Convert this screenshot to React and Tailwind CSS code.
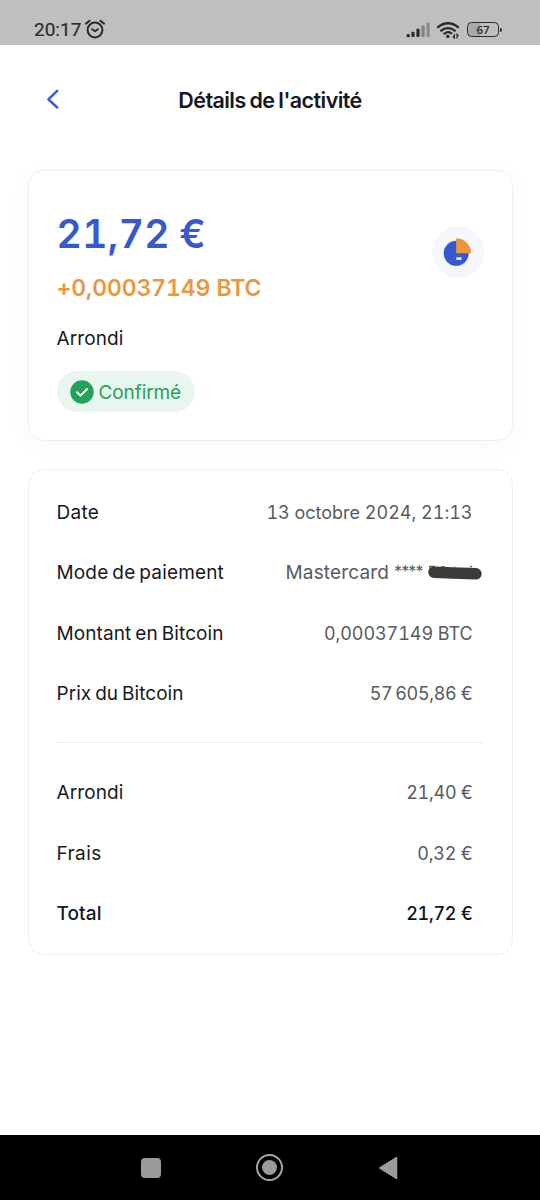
import React from 'react'

const paymentRows = [
    { label: 'Date', value: '13 octobre 2024, 21:13', labelStyle: 'tracking-[0.3px]', valueStyle: 'tracking-[-0.02px]' },
    { label: 'Mode de paiement', masked: true, labelStyle: 'tracking-[0.15px]' },
    { label: 'Montant en Bitcoin', value: '0,00037149 BTC', labelStyle: 'tracking-[0.1px]', valueStyle: 'tracking-[-0.08px]' },
    { label: 'Prix du Bitcoin', value: '57\u2009605,86 €', labelStyle: 'tracking-[0.05px]', valueStyle: 'tracking-[-0.35px]' },
]

const totalRows = [
    { label: 'Arrondi', value: '21,40 €', labelStyle: 'tracking-[0.1px]', valueStyle: 'tracking-[-0.3px]' },
    { label: 'Frais', value: '0,32 €', labelStyle: 'tracking-[0.4px]', valueStyle: 'tracking-[-0.25px]' },
    { label: 'Total', value: '21,72 €', labelStyle: 'tracking-[0.1px] font-medium', valueStyle: 'tracking-[-0.3px] font-medium text-[#11131e]' },
]

function StatusBar() {
    return (
        <div className="flex h-[45px] items-start justify-between bg-[#bfbfbf] pr-[38px] pl-[34px] pt-[18px] text-[#2b2b2b]">
            <div className="flex items-center gap-1">
                <span className="font-[Roboto,sans-serif] text-[19px] leading-6 tracking-[0px] [-webkit-text-stroke:0.2px]">20:17</span>
                <svg className="-mt-0.5 h-5 w-5" viewBox="0 0 20 20" fill="none" stroke="currentColor" strokeWidth="2" strokeLinecap="round" strokeLinejoin="round">
                    <circle cx="10" cy="11" r="7.4" />
                    <path d="M7.2 10.2 10 12.3 12.8 10.2" />
                    <path d="M1 4.6 4.6 1.8M19 4.6 15.4 1.8" />
                </svg>
            </div>
            <div className="flex items-start">
                <svg className="mt-1 h-4 w-6" viewBox="0 0 24 16" fill="currentColor">
                    <rect x="0.6" y="12" width="3.2" height="3.2" rx="1.2" />
                    <rect x="5.4" y="9.7" width="3.2" height="5.4" rx="1" />
                    <rect x="10.4" y="6.7" width="3.2" height="8.4" rx="1" />
                    <rect x="15.5" y="3.5" width="3.2" height="11.6" rx="1" opacity=".4" />
                    <rect x="20.5" y="0.6" width="3.2" height="14.5" rx="1" opacity=".35" />
                </svg>
                <svg className="mt-[3px] ml-1.5 h-[18px] w-6" viewBox="0 0 24 18" fill="none" stroke="currentColor" strokeWidth="2.3" strokeLinecap="round">
                    <path d="M2 6.2C7.8.9 16.2.9 22 6.2" />
                    <path d="M5.2 9.7C9.2 6.2 14.8 6.2 18.8 9.7" />
                    <path d="M8.4 12.6C10.7 10.8 13.3 10.8 15.2 12.1" />
                    <circle cx="11.8" cy="15.4" r="1.7" fill="currentColor" stroke="none" />
                    <path d="M18.4 13.3v3.7l-1.3-1.3M21 17v-3.7l1.3 1.3" strokeWidth="1.2" />
                </svg>
                <div className="mt-1 ml-[7px] flex items-center gap-px">
                    <div className="flex h-[15px] w-8 items-center justify-center rounded-[4.5px] border-[1.5px] border-[#2b2b2b] bg-gradient-to-r from-[#a9a9a9] from-40% to-[#bfbfbf] to-40% font-['Open_Sans',sans-serif] text-[11.5px] leading-none font-semibold">67</div>
                    <div className="h-1 w-[2px] rounded-r-sm bg-[#2b2b2b]" />
                </div>
            </div>
        </div>
    )
}

function Header() {
    return (
        <header className="grid h-[125px] grid-cols-[1fr_auto_1fr] items-start px-[45px] pt-[42px]">
            <svg className="mt-[2px] h-5 w-4" viewBox="0 0 16 20" fill="none" stroke="#3b5bce" strokeWidth="2.5" strokeLinecap="round" strokeLinejoin="round">
                <path d="M12.2 1.8 3.4 10.3l8.8 8.2" />
            </svg>
            <h1 className="text-[21.5px] leading-[26px] font-semibold tracking-[-0.57px] [word-spacing:-1px]">Détails de l'activité</h1>
        </header>
    )
}

function Row({ label, value, masked, labelStyle, valueStyle }) {
    return (
        <div className="flex h-[60.5px] items-center justify-between whitespace-nowrap">
            <span className={`[word-spacing:-1.5px] ${labelStyle}`}>{label}</span>
            {masked ? (
                <span className="-mr-[10px] flex items-center text-[#595a60]">
                    <span className="tracking-[0.15px]">Mastercard</span>
                    <span className="ml-[5px] pb-[5px] text-[16px] leading-5 tracking-[-0.9px]">****</span>
                    {/* hidden card digits */}
                    <svg className="mb-0.5 ml-[5px] h-5 w-[55px]" viewBox="0 0 55 20" fill="none">
                        <path d="M1 4.5h6M2 5v4M13 4.8h4M27 5v-.5M42 4.8l2-.5M2 14l3 1" stroke="#595a60" strokeWidth="1.3" />
                        <path d="M6 10.2 25 11 48 11.8" stroke="#3b3b3b" strokeWidth="11.5" strokeLinecap="round" strokeLinejoin="round" />
                    </svg>
                </span>
            ) : (
                <span className={`text-[18px] text-[#595a60] tabular-nums ${valueStyle}`}>{value}</span>
            )}
        </div>
    )
}

function App() {
    return (
        <div className="flex h-[1200px] w-[540px] flex-col overflow-hidden bg-white font-[Inter,sans-serif] text-[19px] leading-6 text-[#171823]">
            <StatusBar />
            <Header />
            <main className="flex flex-1 flex-col gap-[28px] px-[27.5px]">
                <section className="flex h-[271px] justify-between rounded-[16px] border-[1.5px] border-[#ebeff9] px-[28px] shadow-[0_4px_24px_rgba(60,70,120,0.04)]">
                    <div className="flex flex-col items-start whitespace-nowrap">
                        <div className="mt-[38px] text-[39px] leading-[50px] font-semibold tracking-[0.4px] tabular-nums [word-spacing:-1.5px] text-[#3858ce]">21,72 €</div>
                        <div className="mt-[14px] text-[23px] leading-[30px] font-semibold tracking-[-0.1px] tabular-nums text-[#ea983f]">+0,00037149 BTC</div>
                        <div className="mt-[24px] tracking-[0.1px]">Arrondi</div>
                        <div className="mt-[20px] flex h-[41px] w-[138px] items-center gap-[5px] rounded-full bg-[#e9f5ef] pl-[13px] text-[#28a05a]">
                            <svg className="h-6 w-6 shrink-0" viewBox="0 0 24 24" fill="none">
                                <circle cx="12" cy="12" r="11.7" fill="#22a158" />
                                <path d="m7 12.2 3.4 3.4L17.2 9" stroke="#fff" strokeWidth="2" strokeLinecap="round" strokeLinejoin="round" />
                            </svg>
                            <span className="pt-0.5 tracking-[-0.1px]">Confirmé</span>
                        </div>
                    </div>
                    <div className="mt-[55px] flex h-[52px] w-[52px] items-center justify-center rounded-full bg-[#f5f7fd]">
                        <svg className="h-[30px] w-[30px]" viewBox="0 0 30 30">
                            <circle cx="13.2" cy="16.3" r="12.5" fill="#3659d2" />
                            <path d="M13.2 1.3A14.9 14.9 0 0 1 28.1 16.3H13.2Z" fill="#ef9439" />
                            <rect x="13.2" y="20.3" width="5.4" height="2.8" rx=".8" fill="#e4eafb" />
                        </svg>
                    </div>
                </section>
                <section className="flex h-[486px] flex-col rounded-[16px] border-[1.5px] border-[#ebeff9] px-[28px] pt-[12.5px]">
                    <div className="pr-[11px]">
                        {paymentRows.map((row) => <Row key={row.label} {...row} />)}
                    </div>
                    <hr className="mt-[17.5px] border-t-[1.5px] border-[#ebeff9]" />
                    <div className="mt-[20px] pr-[11px]">
                        {totalRows.map((row) => <Row key={row.label} {...row} />)}
                    </div>
                </section>
            </main>
            <nav className="flex h-[65px] items-center justify-between bg-black pr-[142px] pl-[141px]">
                <div className="h-5 w-5 rounded-[4px] bg-[#9b9b9b]" />
                <div className="flex h-[27px] w-[27px] items-center justify-center rounded-full border-2 border-[#a5a5a5]">
                    <div className="h-[15px] w-[15px] rounded-full bg-[#9b9b9b]" />
                </div>
                <svg className="h-6 w-5" viewBox="0 0 20 24">
                    <path d="M2 12 18.5 1.6v20.8Z" fill="#9b9b9b" stroke="#9b9b9b" strokeWidth="1.6" strokeLinejoin="round" />
                </svg>
            </nav>
        </div>
    )
}

export default App
